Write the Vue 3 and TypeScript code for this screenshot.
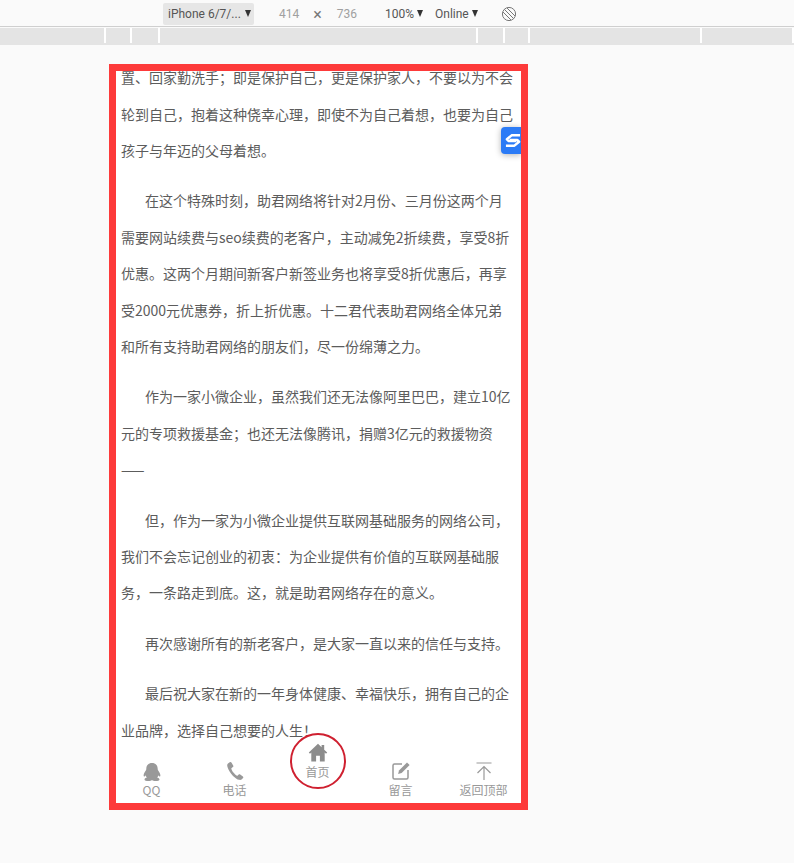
<script setup lang="ts">
const rulerStops: number[] = [106, 26, 28, 318, 27, 25, 172, 92]

const paragraphs = [
  { text: '置、回家勤洗手；即是保护自己，更是保护家人，不要以为不会轮到自己，抱着这种侥幸心理，即使不为自己着想，也要为自己孩子与年迈的父母着想。', indent: false },
  { text: '在这个特殊时刻，助君网络将针对2月份、三月份这两个月需要网站续费与seo续费的老客户，主动减免2折续费，享受8折优惠。这两个月期间新客户新签业务也将享受8折优惠后，再享受2000元优惠券，折上折优惠。十二君代表助君网络全体兄弟和所有支持助君网络的朋友们，尽一份绵薄之力。', indent: true },
  { text: '作为一家小微企业，虽然我们还无法像阿里巴巴，建立10亿元的专项救援基金；也还无法像腾讯，捐赠3亿元的救援物资——', indent: true },
  { text: '但，作为一家为小微企业提供互联网基础服务的网络公司，我们不会忘记创业的初衷：为企业提供有价值的互联网基础服务，一条路走到底。这，就是助君网络存在的意义。', indent: true },
  { text: '再次感谢所有的新老客户，是大家一直以来的信任与支持。', indent: true },
  { text: '最后祝大家在新的一年身体健康、幸福快乐，拥有自己的企业品牌，选择自己想要的人生！', indent: true }
]
</script>

<template>
  <div class="page">
    <div class="toolbar">
      <div class="device">iPhone 6/7/... <i class="caret"></i></div>
      <span class="dim w-414">414</span>
      <span class="times">×</span>
      <span class="dim">736</span>
      <span class="zoom">100% <i class="caret"></i></span>
      <span class="network">Online <i class="caret"></i></span>
      <svg class="rotate" width="16" height="16" viewBox="0 0 16 16" fill="none" stroke="#777" stroke-width="1">
        <circle cx="8" cy="8" r="6.6" />
        <path d="M3.400 3.400 12.600 12.600M6 2 14 10M2 6l8 8" />
      </svg>
    </div>

    <div class="ruler">
      <span v-for="(w, i) in rulerStops" :key="i" class="ruler-seg" :style="{ width: w + 'px' }"></span>
    </div>

    <div class="device-view">
      <div class="article">
        <p v-for="(p, i) in paragraphs" :key="i" :class="{ indent: p.indent }">{{ p.text }}</p>
      </div>

      <nav class="tabbar">
        <a class="tab">
          <svg width="20" height="18" viewBox="0 0 20 18" fill="#999">
            <path d="M10 0C6.300 0 4.300 2.600 4.300 5.800c0 .7-.1 1.200-.5 1.700C2.700 9 1.600 10.800 1.600 12.500c0 1 .5 1.300 1 .9.400-.3.800-.8 1-1.200.2.900.6 1.700 1.300 2.400C3.700 15 2.500 15.700 2.500 16.400c0 1 1.800 1.600 4 1.600 1.500 0 2.800-.4 3.500-1 .7.600 2 1 3.500 1 2.200 0 4-.6 4-1.600 0-.7-1.200-1.400-2.400-1.800.7-.7 1.100-1.500 1.300-2.400.2.400.6.900 1 1.200.5.400 1 .1 1-.9 0-1.700-1.100-3.500-2.200-5-.4-.5-.5-1-.5-1.700C15.700 2.600 13.700 0 10 0z" />
          </svg>
          <span>QQ</span>
        </a>
        <a class="tab">
          <svg width="20" height="20" viewBox="0 0 20 20" fill="#999">
            <path d="M4.700 1.300 3 2.400c-.9.700-1 2-.5 3.700.9 3 2.900 6.300 5.500 8.800 2 1.900 4.200 3.500 6.100 3.900 1.200.2 2.100 0 2.800-.6l1.100-1.100c.5-.5.400-1.200-.1-1.600l-2.700-2c-.5-.4-1.100-.3-1.500.1l-1 1c-.3.300-.7.300-1.100 0-1-.7-2.300-2-3.200-3.100-.9-1.200-1.700-2.600-2-3.600-.2-.5 0-.8.300-1l1.200-.8c.5-.3.600-.9.400-1.400L6.600 1.700c-.4-.6-1.300-.8-1.900-.4z" />
          </svg>
          <span>电话</span>
        </a>
        <a class="tab tab-home">
          <svg width="20" height="20" viewBox="0 0 20 20" fill="#8c8c8c">
            <path d="M10 .8 .8 9.600 2 10.800l1.300-1.200v9h4.800v-5.800h3.800v5.800h4.800v-9l1.300 1.200 1.200-1.200-3-2.900V2h-2.600v2.300z" />
          </svg>
          <span>首页</span>
        </a>
        <a class="tab">
          <svg width="20" height="20" viewBox="0 0 20 20" fill="none" stroke="#999" stroke-width="1.500">
            <path d="M11 3H3.500A1.500 1.500 0 0 0 2 4.500v12A1.500 1.500 0 0 0 3.500 18h12a1.500 1.500 0 0 0 1.500-1.500V9" />
            <path fill="#999" stroke="none" d="m8 9.500 8-8 2.600 2.600-8 8-3.500.9z" />
          </svg>
          <span>留言</span>
        </a>
        <a class="tab">
          <svg width="20" height="20" viewBox="0 0 20 20" fill="none" stroke="#999" stroke-width="1.200">
            <path d="M2.500 2h15M10 19V5.500M3.500 12 10 5.500l6.500 6.500" />
          </svg>
          <span>返回顶部</span>
        </a>
      </nav>

      <div class="float-badge">
        <svg width="16" height="15" viewBox="0 0 17 15" fill="none" stroke="#fff" stroke-width="2.600" stroke-linejoin="round">
          <path d="M16 2H7L2 6.200 4 8h8" />
          <path d="M1 13h9l5-4.200L13 7H5" />
        </svg>
      </div>

      <div class="frame"></div>
    </div>
  </div>
</template>

<style>
html,
body {
  margin: 0;
  background: #fafafa;
}
</style>

<style scoped>
.page {
  height: 863px;
  overflow: hidden;
  background: #fafafa;
  font-family: "Noto Sans CJK SC", "Noto Sans", sans-serif;
}

.toolbar {
  display: flex;
  align-items: center;
  box-sizing: border-box;
  height: 27px;
  padding-top: 1px;
  border-bottom: 1px solid #cfcfcf;
  font-family: Roboto, "Noto Sans", sans-serif;
  font-size: 12px;
  color: #555;
}

.device {
  display: flex;
  align-items: center;
  gap: 4px;
  box-sizing: border-box;
  width: 91px;
  height: 22px;
  margin-left: 163px;
  padding-left: 5px;
  background: #e6e6e6;
  border-radius: 2px;
  white-space: nowrap;
}

.caret {
  display: inline-block;
  width: 0;
  height: 0;
  border-left: 3.500px solid transparent;
  border-right: 3.500px solid transparent;
  border-top: 7px solid #333;
  vertical-align: 1px;
}

.dim {
  color: #a0a0a0;
}

.w-414 {
  margin-left: 25px;
}

.times {
  margin: 2px 15px 0 14px;
  font-size: 16px;
  line-height: 16px;
  color: #777;
}

.zoom {
  margin-left: 28px;
  white-space: nowrap;
}

.network {
  margin-left: 12px;
  white-space: nowrap;
}

.rotate {
  margin-left: 23px;
}

.ruler {
  display: flex;
  height: 17px;
  margin-top: 1px;
  background: #e4e4e4;
}

.ruler-seg {
  box-sizing: border-box;
  height: 15px;
  border-right: 2px solid #fff;
}

.device-view {
  position: relative;
  display: flex;
  flex-direction: column;
  box-sizing: border-box;
  width: 414px;
  height: 746px;
  margin: 19px 0 0 111px;
  background: #fff;
}

.article {
  flex: 1;
  min-height: 0;
  display: flex;
  flex-direction: column;
  justify-content: flex-end;
  overflow: hidden;
  padding: 0 10px;
}

.article p {
  flex: none;
  margin: 14px 0 0;
  font-size: 14px;
  line-height: 36.400px;
  color: #5c5c5c;
}

.article p.indent {
  text-indent: 24px;
}

.tabbar {
  flex: none;
  display: grid;
  grid-template-columns: repeat(5, 83px);
  grid-template-rows: 55px;
  height: 55px;
  margin: 0 0 7px -1px;
}

.tab {
  position: relative;
  display: flex;
  flex-direction: column;
  align-items: center;
  justify-content: flex-end;
  gap: 1px;
  padding-bottom: 5px;
  font-size: 12px;
  line-height: 16px;
  color: #999;
}

.tab svg {
  flex: none;
}

.tab-home {
  padding-bottom: 23px;
}

.tab-home::before {
  content: "";
  position: absolute;
  left: 50%;
  top: -15px;
  box-sizing: border-box;
  width: 56px;
  height: 56px;
  margin-left: -28px;
  border: 2px solid #cf2030;
  border-radius: 50%;
}

.float-badge {
  position: absolute;
  top: 63px;
  left: 390px;
  display: flex;
  align-items: center;
  width: 20px;
  height: 27px;
  box-sizing: border-box;
  padding-left: 4px;
  overflow: hidden;
  background: #2b7bf6;
  border-radius: 4px 0 0 4px;
  box-shadow: 0 1px 6px rgba(0, 0, 0, 0.3);
}

.float-badge svg {
  flex: none;
}

.frame {
  position: absolute;
  inset: 0 -3px 0 -2px;
  border: 7px solid #fd3a3a;
  pointer-events: none;
}
</style>
